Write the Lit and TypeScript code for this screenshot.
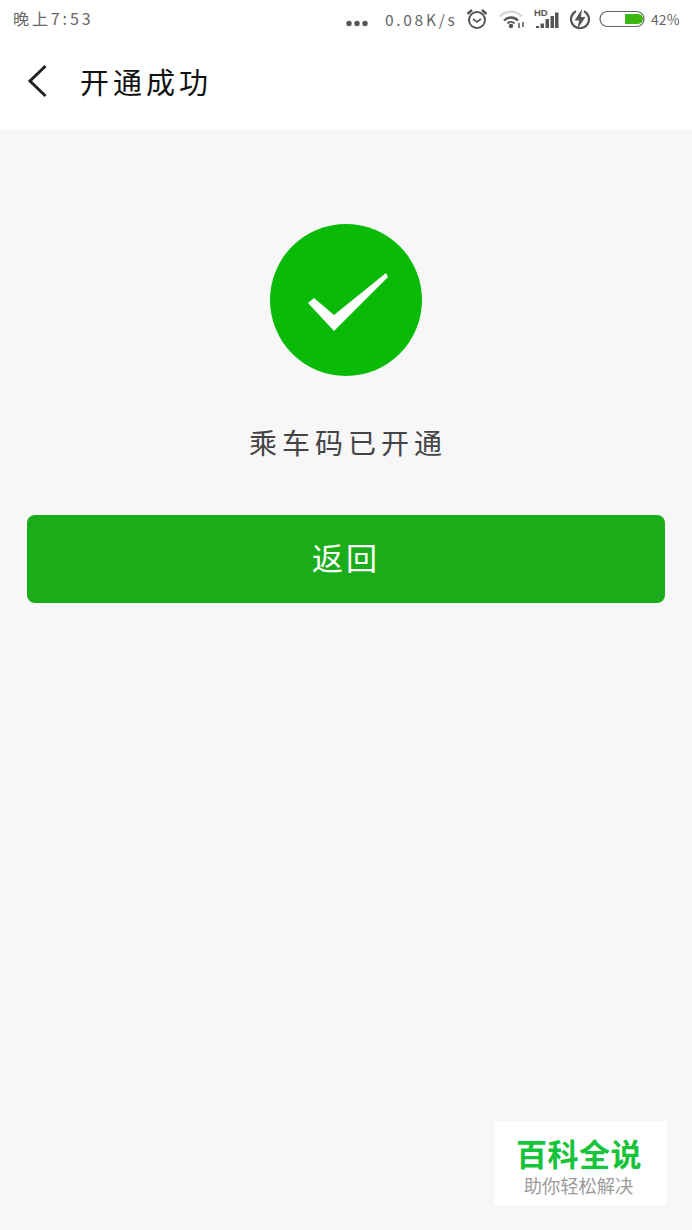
import { LitElement, html, css } from "lit";
import { customElement } from "lit/decorators.js";

@customElement("app-root")
export class AppRoot extends LitElement {
  static styles = css`
    :host { display: block; width: 692px; height: 1230px; position: relative; overflow: hidden; background: #f7f7f7;
      font-family: "Noto Sans CJK SC", "Liberation Sans", sans-serif; }
    .top { background: #fff; height: 130px; display: flex; flex-direction: column; }
    .status { height: 37px; display: flex; align-items: center; padding: 0 12px 0 13px; color: #666; font-size: 16px; box-sizing: border-box; }
    .time { letter-spacing: 2.9px; font-size: 16px; line-height: 37px; }
    .right { margin-left: auto; display: flex; align-items: center; }
    .dots { margin-right: 17px; margin-top: 9px; display: block; }
    .speed { font-size: 15.5px; letter-spacing: 2.7px; margin-right: 10px; width: 71px; white-space: nowrap; }
    .alarm { margin-right: 11px; display: block; }
    .wifi { margin-right: 9px; display: block; }
    .signal { margin-right: 9px; display: block; }
    .bolt { margin-right: 8px; display: block; }
    .batt { margin-right: 6px; display: block; }
    .pct { font-size: 14px; letter-spacing: 0.1px; white-space: nowrap; width: 29px; }
    .nav { flex: 1; display: flex; align-items: center; padding: 0 0 5px 27px; }
    .back { display: block; }
    .title { margin-left: 33px; font-size: 29px; letter-spacing: 4px; color: #111; font-weight: 400; line-height: 40px; }
    .main { display: flex; flex-direction: column; align-items: center; padding: 94px 27px 0; }
    .ok { display: block; }
    .msg { margin-top: 44px; margin-bottom: 2px; font-size: 28px; letter-spacing: 5px; color: #444; line-height: 44px; text-indent: 4px; }
    .btn { margin-top: 49px; width: 638px; height: 88px; background: #1aad19; border-radius: 8px; color: #fff; font-size: 31px; letter-spacing: 3px;
      display: flex; align-items: center; justify-content: center; border: 0; font-family: inherit; padding: 0 0 6px; box-sizing: border-box; }
    .mark { position: absolute; left: 494px; top: 1121px; width: 173px; height: 84px; background: #fff; display: flex; flex-direction: column; align-items: center; }
    .brand { margin-top: 12px; color: #17c33a; font-size: 31px; font-weight: 700; line-height: 40px; letter-spacing: 0.5px; margin-left: -3px; }
    .slogan { color: #9b9b9b; font-size: 18.3px; line-height: 22px; margin-top: 1px; margin-left: -4px; }
  `;

  render() {
    return html`
      <div class="top">
        <div class="status">
          <span class="time">晚上7:53</span>
          <div class="right">
            <svg class="dots" width="22" height="7" viewBox="0 0 22 7"><circle cx="3" cy="3.5" r="2.7" fill="#555"/><circle cx="11" cy="3.5" r="2.7" fill="#555"/><circle cx="19" cy="3.5" r="2.7" fill="#555"/></svg>
            <span class="speed">0.08K/s</span>
            <svg class="alarm" width="22" height="22" viewBox="0 0 22 22" fill="none" stroke="#555"><circle cx="11" cy="12" r="8" stroke-width="2"/><path d="M7 11l4 3 4-3" stroke-width="1.6"/><path d="M1.500 6L6 2M20.500 6L16 2" stroke-width="2.400"/></svg>
            <svg class="wifi" width="26" height="20" viewBox="0 0 26 20" fill="none"><path d="M1 7.500C7 1 17 1 23 7.500" stroke="#d5d5d5" stroke-width="2.400"/><path d="M5 11.500C9 7.500 15 7.500 19 11.500" stroke="#555" stroke-width="2.400"/><path d="M8.500 14.500c2-2 5-2 7 0" stroke="#555" stroke-width="2"/><circle cx="12" cy="17" r="2.200" fill="#555"/><path d="M20 14v5M24 13v5" stroke="#555" stroke-width="1.500"/></svg>
            <svg class="signal" width="26" height="22" viewBox="0 0 26 22"><text x="0" y="8" font-size="9.500" font-weight="700" fill="#555" font-family="Liberation Sans">HD</text><path d="M2 18h3v2H2zM6.500 15.500h3.500V20H6.500zM11.500 11h3.500v9h-3.500zM16.500 8H20v12h-3.500zM21 4.500h3.500V20H21z" fill="#555"/></svg>
            <svg class="bolt" width="22" height="22" viewBox="0 0 22 22" fill="none"><path d="M7 3.200a9 9 0 1 0 8 0" stroke="#555" stroke-width="2.200"/><path d="M13 1L5.500 12.500h4.500L8.500 21 16.500 9H12z" fill="#555"/></svg>
            <svg class="batt" width="46" height="18" viewBox="0 0 46 18"><rect x="1" y="1.500" width="44" height="15" rx="7.500" fill="#fff" stroke="#666" stroke-width="1.200"/><path d="M26 4h13a5 5 0 0 1 0 10H26z" fill="#3cb80f"/></svg>
            <span class="pct">42%</span>
          </div>
        </div>
        <div class="nav">
          <svg class="back" width="20" height="34" viewBox="0 0 20 34" fill="none"><path d="M18.500 2L3 17l15.500 15" stroke="#222" stroke-width="3"/></svg>
          <span class="title">开通成功</span>
        </div>
      </div>
      <div class="main">
        <svg class="ok" width="152" height="152" viewBox="0 0 152 152"><circle cx="76" cy="76" r="76" fill="#09bb07"/><polygon points="38,79 44,74 64,91 116,49 118,53 64,107" fill="#fff"/></svg>
        <div class="msg">乘车码已开通</div>
        <button class="btn">返回</button>
      </div>
      <div class="mark">
        <div class="brand">百科全说</div>
        <div class="slogan">助你轻松解决</div>
      </div>
    `;
  }
}
